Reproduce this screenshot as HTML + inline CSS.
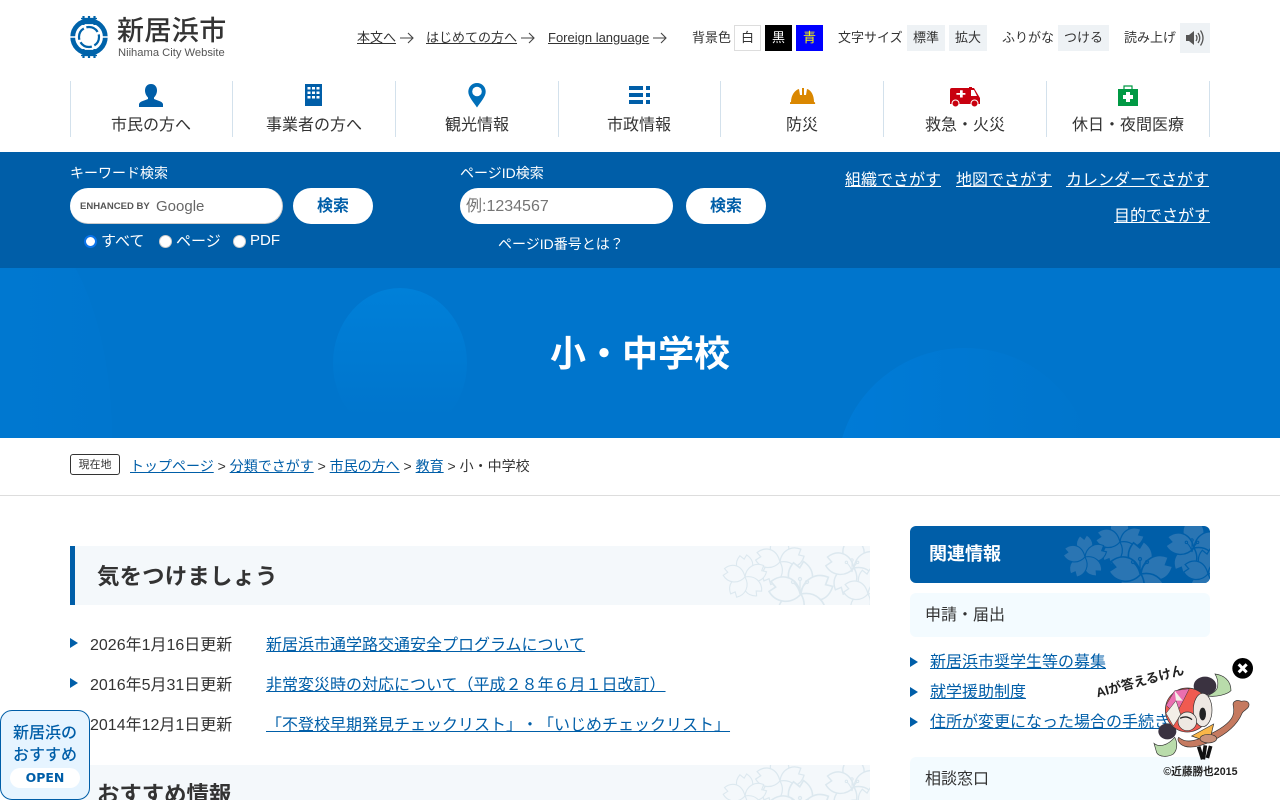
<!DOCTYPE html>
<html lang="ja"><head><meta charset="utf-8"><title>小・中学校</title>
<style>
html,body{margin:0;padding:0;width:1280px;height:800px;overflow:hidden;background:#fff}
body{position:relative;font-family:"Liberation Sans","Noto Sans CJK JP",sans-serif;color:#333;text-spacing-trim:space-all}
.a{position:absolute;white-space:nowrap}
a{color:inherit}
.t{font-size:13px;line-height:18px;color:#333}
.b{position:absolute;top:25px;height:26px;line-height:24px;text-align:center;font-size:13px;box-sizing:border-box}
.g{background:#eef2f5;color:#333;line-height:26px}
.sep{position:absolute;top:81px;width:1px;height:56px;background:#d3e1ec}
.nav{position:absolute;top:116px;font-size:16px;line-height:20px;text-align:center;width:162px;color:#333}
.w{color:#fff}
.pill{position:absolute;top:188px;height:36px;background:#fff;border-radius:18px;box-sizing:border-box}
.btn{width:80px;text-align:center;line-height:38px;font-size:16px;font-weight:bold;color:#005ea8}
.wl{font-size:16px;line-height:20px;color:#fff;text-decoration:underline}
.li{font-size:16px;line-height:22px;color:#333}
.lk{color:#005ea8;text-decoration:underline}
.tri{position:absolute;width:0;height:0;border-left:8px solid #005ea8;border-top:5.5px solid transparent;border-bottom:5.5px solid transparent}
.rd{position:absolute;top:235px;width:13px;height:13px;border-radius:50%;background:#fff;border:1px solid #ccc;box-sizing:border-box}
</style></head><body>
<svg width="0" height="0" style="position:absolute"><defs>
<path id="pt" d="M0 0C-11-5-13-17-6-25L-1-21 2-26C11-20 13-8 0 0z"/>
<g id="fw"><use href="#pt"/><use href="#pt" transform="rotate(72)"/><use href="#pt" transform="rotate(144)"/><use href="#pt" transform="rotate(216)"/><use href="#pt" transform="rotate(288)"/></g>
<g id="st" fill="none"><path d="M0 0C-1-5-3-8-6-11M0 0C0-5 0-8 0-13M0 0C1-5 3-8 6-11"/><circle cx="-7" cy="-12" r="1.500"/><circle cx="0" cy="-15" r="1.500"/><circle cx="7" cy="-12" r="1.500"/></g>
<g id="fl" stroke-width="1.300">
<use href="#fw" transform="translate(60 16) scale(.95)"/>
<use href="#fw" transform="translate(25 31) scale(.85)"/>
<use href="#fw" transform="translate(134 22) scale(1.100)"/>
<use href="#st" transform="translate(132 26) scale(.8)"/>
<use href="#fw" transform="translate(81 48) scale(1.250)"/>
<use href="#st" transform="translate(80 48)"/>
<use href="#fw" transform="translate(148 48) scale(.95)"/>
</g></defs></svg>

<!-- logo -->
<svg class="a" style="left:70px;top:16px" width="38" height="42" viewBox="0 0 38 42">
<circle cx="19" cy="21" r="16.300" fill="none" stroke="#0063aa" stroke-width="4.800"/>
<circle cx="19" cy="21" r="10" fill="none" stroke="#0063aa" stroke-width="2.200" stroke-dasharray="13 2.700" stroke-dashoffset="3"/>
<path d="M13.500 0v9M19 0v8M24.500 0v9M13.500 33v9M19 34v8M24.500 33v9" stroke="#0063aa" stroke-width="2.200"/>
<path d="M11 2.500h16M11 7.500h16M11 34.500h16M11 39.500h16" stroke="#0063aa" stroke-width="1.300"/>
<path d="M0 21h7M31 21h7" stroke="#fff" stroke-width="1.500"/>
</svg>
<div class="a" style="left:117px;top:15px;font-size:27px;line-height:32px;font-weight:500;color:#333;letter-spacing:.4px">新居浜市</div>
<div class="a" style="left:118px;top:47px;font-size:11.200px;line-height:13px;color:#555">Niihama City Website</div>

<!-- top links -->
<div class="a t" style="left:357px;top:29px"><a style="text-decoration:underline">本文へ</a></div>
<svg class="a" style="left:400px;top:32px" width="14" height="12" fill="none" stroke="#444" stroke-width="1.100"><path d="M0 6h13M8 1l5 5-5 5"/></svg>
<div class="a t" style="left:426px;top:29px"><a style="text-decoration:underline">はじめての方へ</a></div>
<svg class="a" style="left:521px;top:32px" width="14" height="12" fill="none" stroke="#444" stroke-width="1.100"><path d="M0 6h13M8 1l5 5-5 5"/></svg>
<div class="a t" style="left:548px;top:29px"><a style="text-decoration:underline">Foreign language</a></div>
<svg class="a" style="left:653px;top:32px" width="14" height="12" fill="none" stroke="#444" stroke-width="1.100"><path d="M0 6h13M8 1l5 5-5 5"/></svg>

<div class="a t" style="left:692px;top:29px">背景色</div>
<div class="b" style="left:734px;width:27px;border:1px solid #ddd;background:#fff">白</div>
<div class="b" style="left:765px;width:27px;background:#000;color:#fff;line-height:26px">黒</div>
<div class="b" style="left:796px;width:27px;background:#00f;color:#ff0;line-height:26px">青</div>
<div class="a t" style="left:838px;top:29px">文字サイズ</div>
<div class="b g" style="left:907px;width:38px">標準</div>
<div class="b g" style="left:949px;width:38px">拡大</div>
<div class="a t" style="left:1002px;top:29px">ふりがな</div>
<div class="b g" style="left:1058px;width:51px">つける</div>
<div class="a t" style="left:1124px;top:29px">読み上げ</div>
<div class="a" style="left:1180px;top:23px;width:30px;height:30px;background:#eef2f5"></div>
<svg class="a" style="left:1185px;top:27px" width="20" height="22" viewBox="0 0 20 22" fill="none" stroke="#555">
<path d="M1 8h3l5-4v14l-5-4H1z" fill="#555" stroke="none"/>
<path d="M11 8q2 3 0 6M13 6q3.500 5 0 10M15.500 3.500q5 7.500 0 15" stroke-width="1.300"/></svg>

<!-- nav -->
<div class="sep" style="left:70px"></div><div class="sep" style="left:232px"></div><div class="sep" style="left:395px"></div><div class="sep" style="left:558px"></div><div class="sep" style="left:720px"></div><div class="sep" style="left:883px"></div><div class="sep" style="left:1046px"></div><div class="sep" style="left:1209px"></div>
<div class="nav" style="left:70px">市民の方へ</div>
<div class="nav" style="left:233px">事業者の方へ</div>
<div class="nav" style="left:396px">観光情報</div>
<div class="nav" style="left:558px">市政情報</div>
<div class="nav" style="left:721px">防災</div>
<div class="nav" style="left:884px">救急・火災</div>
<div class="nav" style="left:1047px">休日・夜間医療</div>

<svg class="a" style="left:139px;top:84px" width="24" height="23" viewBox="0 0 24 23"><path d="M12 0c4 0 6 3 6 6.500 0 3-1.500 5.500-3 7v1.500c3 1.500 8 2 9 5v3H0v-3c1-3 6-3.500 9-5v-1.500c-1.500-1.500-3-4-3-7C6 3 8 0 12 0z" fill="#005ea8"/></svg>
<svg class="a" style="left:305px;top:84px" width="17" height="22" viewBox="0 0 17 22"><rect width="17" height="22" fill="#005ea8"/><path d="M2.500 3h3v2.500h-3zM7 3h3v2.500H7zM11.500 3h3v2.500h-3zM2.500 7.500h3V10h-3zM7 7.500h3V10H7zM11.500 7.500h3V10h-3zM2.500 12h3v2.500h-3zM7 12h3v2.500H7zM11.500 12h3v2.500h-3z" fill="#fff"/></svg>
<svg class="a" style="left:468px;top:83px" width="18" height="25" viewBox="0 0 18 25"><path d="M9 0a8.700 8.700 0 0 1 8.700 8.700c0 5-5 10-8.700 15.800C5.300 18.700.3 13.700.3 8.700A8.700 8.700 0 0 1 9 0z" fill="#006fb9"/><circle cx="9" cy="8.500" r="4.800" fill="#fff"/></svg>
<svg class="a" style="left:629px;top:86px" width="21" height="18" viewBox="0 0 21 18" fill="#005ea8"><path d="M0 0h14v4H0zM17 0h4v4h-4zM0 7h14v4H0zM17 7h4v4h-4zM0 14h14v4H0zM17 14h4v4h-4z"/></svg>
<svg class="a" style="left:790px;top:87px" width="26" height="17" viewBox="0 0 26 17"><path d="M0 17c-.500-1 0-2 1-2 0-7 4-12 8-13l1 6h2V1h2v7h2l1-6c4 1 7 6 7 13 1 0 1.500 1 1 2z" fill="#da8700"/></svg>
<svg class="a" style="left:950px;top:85px" width="30" height="22" viewBox="0 0 30 22"><path d="M2 3h17V2h3v1h2l6 10v6H0V5a2 2 0 0 1 2-2z" fill="#c8000f"/><path d="M21 5h3l3 6h-6z" fill="#fff"/><path d="M10 7h3v3h3v2h-3v3h-3v-3H6v-2h4z" fill="#fff" transform="translate(1 -1) scale(.9)"/><circle cx="5.500" cy="18.500" r="3.500" fill="#c8000f" stroke="#fff"/><circle cx="24.500" cy="18.500" r="3.500" fill="#c8000f" stroke="#fff"/></svg>
<svg class="a" style="left:1118px;top:85px" width="20" height="21" viewBox="0 0 20 21"><rect y="4" width="20" height="17" fill="#009944"/><path d="M6 4V1h8v3" fill="none" stroke="#009944" stroke-width="1.200"/><path d="M8 7h4v3h3v4h-3v3H8v-3H5v-4h3z" fill="#fff"/></svg>

<!-- search band -->
<div class="a" style="left:0;top:152px;width:1280px;height:116px;background:#005ea8"></div>
<div class="a w" style="left:70px;top:164px;font-size:14px;line-height:18px">キーワード検索</div>
<div class="pill" style="left:70px;width:213px;border-right:1px solid #ccc;border-bottom:1px solid #ccc"></div>
<div class="a" style="left:80px;top:201px;font-size:9.500px;line-height:12px;color:#555;font-weight:bold">ENHANCED BY</div>
<div class="a" style="left:156px;top:197px;font-size:15px;line-height:20px;color:#666">Google</div>
<div class="pill btn" style="left:293px">検索</div>
<div class="rd" style="left:84px;border:2.500px solid #0a74ea"></div><div class="a w" style="left:101px;top:233px;font-size:15px;line-height:18px">すべて</div>
<div class="rd" style="left:159px"></div><div class="a w" style="left:176px;top:233px;font-size:15px;line-height:18px">ページ</div>
<div class="rd" style="left:233px"></div><div class="a w" style="left:250px;top:232px;font-size:15px;line-height:18px">PDF</div>

<div class="a w" style="left:460px;top:164px;font-size:14px;line-height:18px">ページID検索</div>
<div class="pill" style="left:460px;width:213px;padding-left:6px;font-size:16px;line-height:38px;color:#757575">例:1234567</div>
<div class="pill btn" style="left:686px">検索</div>
<div class="a w" style="left:498px;top:235px;font-size:14px;line-height:18px">ページID番号とは？</div>

<div class="a wl" style="left:845px;top:171px">組織でさがす</div>
<div class="a wl" style="left:956px;top:171px">地図でさがす</div>
<div class="a wl" style="left:1066px;top:171px">カレンダーでさがす</div>
<div class="a wl" style="left:1114px;top:207px">目的でさがす</div>

<!-- hero -->
<div class="a" style="left:0;top:268px;width:1280px;height:170px;overflow:hidden;background:#0075cc">
<svg width="1280" height="170" style="position:absolute;left:0;top:0"><defs>
<linearGradient id="h1" x1="0" y1="0" x2="0" y2="1"><stop offset="0" stop-color="#0080d9"/><stop offset=".85" stop-color="#0080d9" stop-opacity="0"/></linearGradient>
<linearGradient id="h3" x1="0" y1="0" x2="1" y2="0"><stop offset="0" stop-color="#007bd7"/><stop offset="1" stop-color="#007bd7" stop-opacity="0"/></linearGradient>
<linearGradient id="h4" x1="0" y1="0" x2="1" y2="0"><stop offset="0" stop-color="#007ad3"/><stop offset="1" stop-color="#0076ce"/></linearGradient>
</defs>
<rect width="1280" height="170" fill="#0075cc"/>
<ellipse cx="0" cy="170" rx="112" ry="230" fill="url(#h4)"/>
<ellipse cx="400" cy="95" rx="67" ry="75" fill="url(#h1)"/>
<ellipse cx="965" cy="205" rx="128" ry="125" fill="url(#h3)"/>
</svg>
</div>
<div class="a" style="left:0;top:330px;width:1280px;text-align:center;font-size:36px;line-height:48px;font-weight:bold;color:#fff">小・中学校</div>

<!-- breadcrumb -->
<div class="a" style="left:70px;top:454px;width:50px;height:21px;border:1px solid #333;border-radius:3px;box-sizing:border-box;text-align:center;font-size:11px;line-height:20px">現在地</div>
<div class="a" style="left:130px;top:456px;font-size:14px;line-height:20px;color:#333"><a class="lk">トップページ</a> &gt; <a class="lk">分類でさがす</a> &gt; <a class="lk">市民の方へ</a> &gt; <a class="lk">教育</a> &gt; 小・中学校</div>
<div class="a" style="left:0;top:495px;width:1280px;height:1px;background:#ddd"></div>

<!-- main -->
<div class="a" style="left:70px;top:546px;width:800px;height:59px;background:#f4f8fb;border-left:5px solid #005ea8;box-sizing:border-box;overflow:hidden">
<svg style="position:absolute;right:0;top:0" width="150" height="59" viewBox="0 0 150 59" stroke="#dce8ef" fill="#f4f8fb"><use href="#fl"/></svg></div>
<div class="a" style="left:97px;top:561px;font-size:22.400px;line-height:32px;font-weight:bold;color:#333;letter-spacing:.2px">気をつけましょう</div>

<div class="tri" style="left:70px;top:638px"></div>
<div class="a li" style="left:90px;top:635px">2026年1月16日更新</div>
<div class="a li" style="left:266px;top:635px"><a class="lk">新居浜市通学路交通安全プログラムについて</a></div>
<div class="tri" style="left:70px;top:678px"></div>
<div class="a li" style="left:90px;top:675px">2016年5月31日更新</div>
<div class="a li" style="left:266px;top:675px"><a class="lk">非常変災時の対応について（平成２８年６月１日改訂）</a></div>
<div class="tri" style="left:70px;top:718px"></div>
<div class="a li" style="left:90px;top:715px">2014年12月1日更新</div>
<div class="a li" style="left:266px;top:715px"><a class="lk">「不登校早期発見チェックリスト」・「いじめチェックリスト」</a></div>

<div class="a" style="left:70px;top:765px;width:800px;height:35px;background:#f4f8fb;border-left:5px solid #005ea8;box-sizing:border-box;overflow:hidden">
<svg style="position:absolute;right:0;top:0" width="150" height="59" viewBox="0 0 150 59" stroke="#dce8ef" fill="#f4f8fb"><use href="#fl"/></svg></div>
<div class="a" style="left:97px;top:779px;height:21px;overflow:hidden;font-size:22.400px;line-height:32px;font-weight:bold;color:#333">おすすめ情報</div>

<!-- side -->
<div class="a" style="left:910px;top:526px;width:300px;height:57px;background:#005ea8;border-radius:6px;overflow:hidden">
<svg style="position:absolute;right:0;top:0" width="150" height="57" viewBox="0 0 150 57" stroke="#005ea8" fill="#2a75b3"><use href="#fl"/></svg></div>
<div class="a" style="left:929px;top:541px;font-size:18px;line-height:26px;font-weight:bold;color:#fff">関連情報</div>
<div class="a" style="left:910px;top:593px;width:300px;height:44px;background:#f3fbff;border-radius:6px"></div>
<div class="a" style="left:925px;top:605px;font-size:16px;line-height:22px;color:#333">申請・届出</div>
<div class="tri" style="left:910px;top:657px"></div>
<div class="a li" style="left:930px;top:652px"><a class="lk">新居浜市奨学生等の募集</a></div>
<div class="tri" style="left:910px;top:687px"></div>
<div class="a li" style="left:930px;top:682px"><a class="lk">就学援助制度</a></div>
<div class="tri" style="left:910px;top:717px"></div>
<div class="a li" style="left:930px;top:712px"><a class="lk">住所が変更になった場合の手続き</a></div>
<div class="a" style="left:910px;top:757px;width:300px;height:43px;background:#f3fbff;border-radius:6px 6px 0 0"></div>
<div class="a" style="left:925px;top:769px;font-size:16px;line-height:22px;color:#333">相談窓口</div>

<!-- floating left -->
<div class="a" style="left:0;top:710px;width:90px;height:90px;background:#e6f4ff;border:1px solid #005ea8;border-radius:12px;box-sizing:border-box"></div>
<div class="a" style="left:0;top:723px;width:90px;text-align:center;font-size:16px;line-height:22px;font-weight:500;color:#005ea8">新居浜の<br>おすすめ</div>
<div class="a" style="left:10px;top:768px;width:70px;height:20px;border-radius:10px;background:#fff;text-align:center;font-family:'DejaVu Sans',sans-serif;font-size:12.500px;line-height:20px;font-weight:bold;color:#005ea8">OPEN</div>

<!-- mascot -->
<svg class="a" style="left:1080px;top:650px" width="180" height="140" viewBox="0 0 540 420">
<path d="M405 72c25 3 48 18 48 50-12 12-45 20-70 16 10-8 28-12 30-30 2-14-2-26-8-36z" fill="#b9dcab" stroke="#333" stroke-width="2"/>
<ellipse cx="375" cy="108" rx="34" ry="28" fill="#3a3240"/>
<path d="M222 280c15 12 40 8 62-18 8 14 10 36-4 50-16 10-42 10-50-4z" fill="#b9dcab" stroke="#333" stroke-width="2"/>
<ellipse cx="262" cy="244" rx="27" ry="24" fill="#3a3240"/>
<path d="M296 262c20 16 40 12 62 4 36-14 78-34 96-60 8-12 8-28 6-38-4-14 10-20 24-14 18-4 26 4 22 16-6 10-16 12-20 20-14 34-46 62-92 84-30 14-60 22-82 14-14-6-22-18-16-26z" fill="#c57a60" stroke="#333" stroke-width="2"/>
<circle cx="322" cy="180" r="66" fill="#f05a50" stroke="#333" stroke-width="2"/>
<path d="M258 166l26-44 44-6-18 36-22 40z" fill="#ea6fb0" stroke="#333" stroke-width="1.500"/>
<path d="M258 190l30-38 14 42-22 34z" fill="#f3efe8" stroke="#333" stroke-width="1.500"/>
<path d="M284 122l24 30-20 0z" fill="#f3efe8"/>
<ellipse cx="368" cy="180" rx="28" ry="50" fill="#eee8e2" stroke="#333" stroke-width="2"/>
<ellipse cx="322" cy="214" rx="28" ry="28" fill="#eee8e2" stroke="#333" stroke-width="2"/>
<ellipse cx="368" cy="192" rx="10" ry="19" fill="#222"/>
<path d="M300 205c12-6 24-6 36 4" fill="none" stroke="#222" stroke-width="4"/>
<path d="M335 258l66-36-8 34-30 12z" fill="#f9b648" stroke="#333" stroke-width="2"/>
<ellipse cx="385" cy="266" rx="25" ry="13" fill="#c9917a" stroke="#333" stroke-width="2"/>
<path d="M356 290l12 38M376 286l-6 42M392 288l-10 36" stroke="#111" stroke-width="11" fill="none"/>
<circle cx="488" cy="55" r="31" fill="#000"/>
<path d="M476 43l24 24M500 43l-24 24" stroke="#fff" stroke-width="9"/>
<text transform="translate(52 142) rotate(-15)" font-family="Liberation Sans,Noto Sans CJK JP,sans-serif" font-size="39" font-weight="bold" fill="#222">AIが答えるけん</text>
<text x="250" y="375" font-family="Liberation Sans,Noto Sans CJK JP,sans-serif" font-size="32" font-weight="bold" fill="#222">©近藤勝也2015</text>
</svg>
</body></html>
